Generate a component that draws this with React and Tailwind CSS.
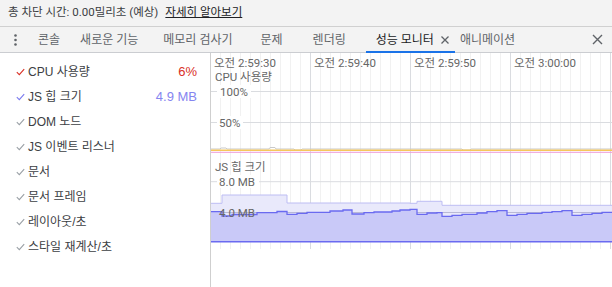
import React from 'react';

const FONT = { fontFamily: 'Roboto, "Noto Sans CJK KR", sans-serif' };
const LIST_FONT = { fontFamily: '"Liberation Sans", "Noto Sans CJK KR", sans-serif' };

const metrics = [
    { label: 'CPU 사용량', value: '6%', check: 'text-[#d93025]', valueColor: 'text-[#d93025]' },
    { label: 'JS 힙 크기', value: '4.9 MB', check: 'text-[#7b7bef]', valueColor: 'text-[#8585f0]' },
    { label: 'DOM 노드', check: 'text-[#9aa0a6]' },
    { label: 'JS 이벤트 리스너', check: 'text-[#9aa0a6]' },
    { label: '문서', check: 'text-[#9aa0a6]' },
    { label: '문서 프레임', check: 'text-[#9aa0a6]' },
    { label: '레이아웃/초', check: 'text-[#9aa0a6]' },
    { label: '스타일 재계산/초', check: 'text-[#9aa0a6]' },
];

const tabs = [
    { label: '콘솔' },
    { label: '새로운 기능' },
    { label: '메모리 검사기', ml: 'ml-[5px]' },
    { label: '문제', ml: 'ml-[8px]' },
    { label: '렌더링', ml: 'ml-[10px]' },
    { label: '성능 모니터', active: true, ml: 'ml-[10px]' },
    { label: '애니메이션', ml: '-ml-[5px]' },
];

// step series, [x start (abs), y (abs)]
const darkSteps = [
    [210, 211.7], [222, 216], [232, 214.5], [257, 212.7], [277, 211.5], [287, 214.3], [297, 213.3],
    [307, 212.3], [330, 211], [343, 210], [352, 214], [364, 212.7], [374, 212], [392, 211], [400, 210],
    [410, 209.3], [417, 214.3], [427, 213], [437, 212.7], [442, 216.3], [452, 215.3], [462, 214.3],
    [477, 213], [487, 211.7], [497, 210.7], [507, 215.3], [517, 214.3], [527, 213.3], [542, 212.3],
    [552, 211.7], [562, 210.7], [572, 215.3], [582, 214.3], [592, 213.3], [602, 212.3],
];
const lightSteps = [
    [210, 203.3], [222, 195], [287, 203], [410, 203.3], [417, 201.3], [442, 205.3],
];

const OX = 211;
const OY = 53;

function stepPath(steps, endX, bottom) {
    let d = '';
    steps.forEach(([x, y], i) => {
        const nx = (i + 1 < steps.length ? steps[i + 1][0] : endX) - OX;
        const sx = x - OX;
        const sy = y - OY;
        d += i === 0 ? `M${sx} ${sy} ` : `L${sx} ${sy} `;
        d += `L${nx} ${sy} `;
    });
    const line = d;
    const area = `${d}L${endX - OX} ${bottom} L${steps[0][0] - OX} ${bottom} Z`;
    return { line, area };
}

function Chart() {
    const W = 401;
    const H = 234;
    const bottom = 241.7 - OY;
    const dark = stepPath(darkSteps, 612, bottom);
    const light = stepPath(lightSteps, 612, bottom);
    const minor = [];
    for (let x = 9.5; x < W; x += 10) minor.push(x);
    const major = [99.5, 199.5, 299.5, 399.5];
    const times = ['오전 2:59:30', '오전 2:59:40', '오전 2:59:50', '오전 3:00:00'];

    return (
        <svg width={W} height={H} className="block" style={FONT}>
            {minor.map((x) => (
                <line key={x} x1={x} y1={0} x2={x} y2={196} stroke="#f1f1f1" strokeWidth="1" />
            ))}
            {major.map((x) => (
                <line key={x} x1={x} y1={0} x2={x} y2={196} stroke="#dadce0" strokeWidth="1" />
            ))}
            {times.map((t, i) => (
                <text key={t} x={i * 100 + 3} y={14} fontSize="11.5" fill="#666">{t}</text>
            ))}

            {/* CPU */}
            <text x={4} y={27.5} fontSize="11.5" fill="#666">CPU 사용량</text>
            <line x1={0} y1={38.5} x2={W} y2={38.5} stroke="#dadce0" />
            <rect x={6} y={32} width={34} height={13} fill="white" />
            <text x={9} y={42.5} fontSize="11.5" fill="#666">100%</text>
            <line x1={0} y1={69.5} x2={W} y2={69.5} stroke="#dadce0" />
            <rect x={6} y={63} width={26} height={13} fill="white" />
            <text x={8} y={73.5} fontSize="11.5" fill="#666">50%</text>
            <polyline
                points="0,96 9,96 10,95 15,95 16,96 58,96 59,94.5 64,94.5 65,96 83,96 84,97 90,97 91,96 251,96 252,97 259,97 260,96 401,96"
                fill="none" stroke="#c9c9c9" strokeWidth="1"
            />
            <line x1={0} y1={97.3} x2={W} y2={97.3} stroke="#f6c75a" strokeWidth="1.6" />
            <line x1={0} y1={99.3} x2={W} y2={99.3} stroke="#ee9ad8" strokeWidth="1" />

            {/* Heap */}
            <text x={4} y={117.5} fontSize="11.5" fill="#666">JS 힙 크기</text>
            <line x1={0} y1={128.7} x2={W} y2={128.7} stroke="#dadce0" />
            <rect x={6} y={122} width={42} height={13} fill="white" />
            <text x={8} y={132.5} fontSize="11.5" fill="#666">8.0 MB</text>
            <path d={light.area} fill="#e9e9fb" />
            <path d={light.line} fill="none" stroke="#bdbdf3" strokeWidth="1" />
            <line x1={0} y1={159.5} x2={W} y2={159.5} stroke="#b9b9d6" />
            <path d={dark.area} fill="#c9c9f8" />
            <path d={dark.line} fill="none" stroke="#6a6af0" strokeWidth="1.3" />
            <text x={8} y={163.5} fontSize="11.5" fill="#666">4.0 MB</text>
            <line x1={0} y1={bottom} x2={W} y2={bottom} stroke="#6a6af0" strokeWidth="1.5" />
        </svg>
    );
}

function Check({ className }) {
    return (
        <svg width="9" height="8" viewBox="0 0 9 8" className={className}>
            <path d="M0.8 4.2 L3.3 6.6 L8.2 1.2" fill="none" stroke="currentColor" strokeWidth="1.1" />
        </svg>
    );
}

export default function App() {
    return (
        <div className="w-[612px] h-[287px] flex flex-col bg-white overflow-hidden text-[#303942]" style={FONT}>
            {/* Info bar */}
            <div className="h-[27px] shrink-0 flex items-center px-[8px] bg-[#f3f3f3] border-b border-[#d0d0d0] text-[11.5px]">
                <span className="text-[#3c4043]">총 차단 시간: 0.00밀리초 (예상)</span>
                <span className="ml-[7px] underline text-[#202124]">자세히 알아보기</span>
            </div>

            {/* Tab strip */}
            <div className="h-[26px] shrink-0 flex items-stretch bg-[#f3f3f3] border-b border-[#cbcdd1] text-[12px] text-[#5f6368]">
                <div className="w-[28px] flex items-center justify-center pl-[2px]">
                    <svg width="3" height="12" viewBox="0 0 3 12">
                        <circle cx="1.5" cy="1.5" r="1.3" fill="#5f6368" />
                        <circle cx="1.5" cy="6" r="1.3" fill="#5f6368" />
                        <circle cx="1.5" cy="10.5" r="1.3" fill="#5f6368" />
                    </svg>
                </div>
                {tabs.map((t) => (
                    <div
                        key={t.label}
                        className={`relative flex items-center pl-[10px] ${t.active ? 'pr-[5px] text-[#202124]' : 'pr-[10px]'} ${t.ml || ''}`}
                    >
                        <span>{t.label}</span>
                        {t.active && (
                            <svg width="10" height="10" viewBox="0 0 10 10" className="ml-[6px]">
                                <path d="M1.5 1.5 L8.5 8.5 M8.5 1.5 L1.5 8.5" stroke="#5f6368" strokeWidth="1.3" />
                            </svg>
                        )}
                        {t.active && <div className="absolute left-0 right-0 bottom-[-1px] h-[2px] bg-[#1a73e8]" />}
                    </div>
                ))}
                <div className="flex-1" />
                <div className="w-[30px] flex items-center justify-center">
                    <svg width="11" height="11" viewBox="0 0 11 11">
                        <path d="M1 1 L10 10 M10 1 L1 10" stroke="#5f6368" strokeWidth="1.4" />
                    </svg>
                </div>
            </div>

            {/* Body */}
            <div className="flex-1 flex min-h-0">
                <div className="w-[210px] shrink-0 pt-[6px] text-[12px]" style={LIST_FONT}>
                    {metrics.map((m) => (
                        <div key={m.label} className="h-[25px] flex items-center pl-[16px] pr-[13px]">
                            <Check className={m.check} />
                            <span className="ml-[3px] text-[#3c4043]">{m.label}</span>
                            <span className="flex-1" />
                            {m.value && <span className={`text-[13px] ${m.valueColor}`}>{m.value}</span>}
                        </div>
                    ))}
                </div>
                <div className="flex-1 border-l border-[#cfcfcf] min-w-0">
                    <Chart />
                </div>
            </div>
        </div>
    );
}
